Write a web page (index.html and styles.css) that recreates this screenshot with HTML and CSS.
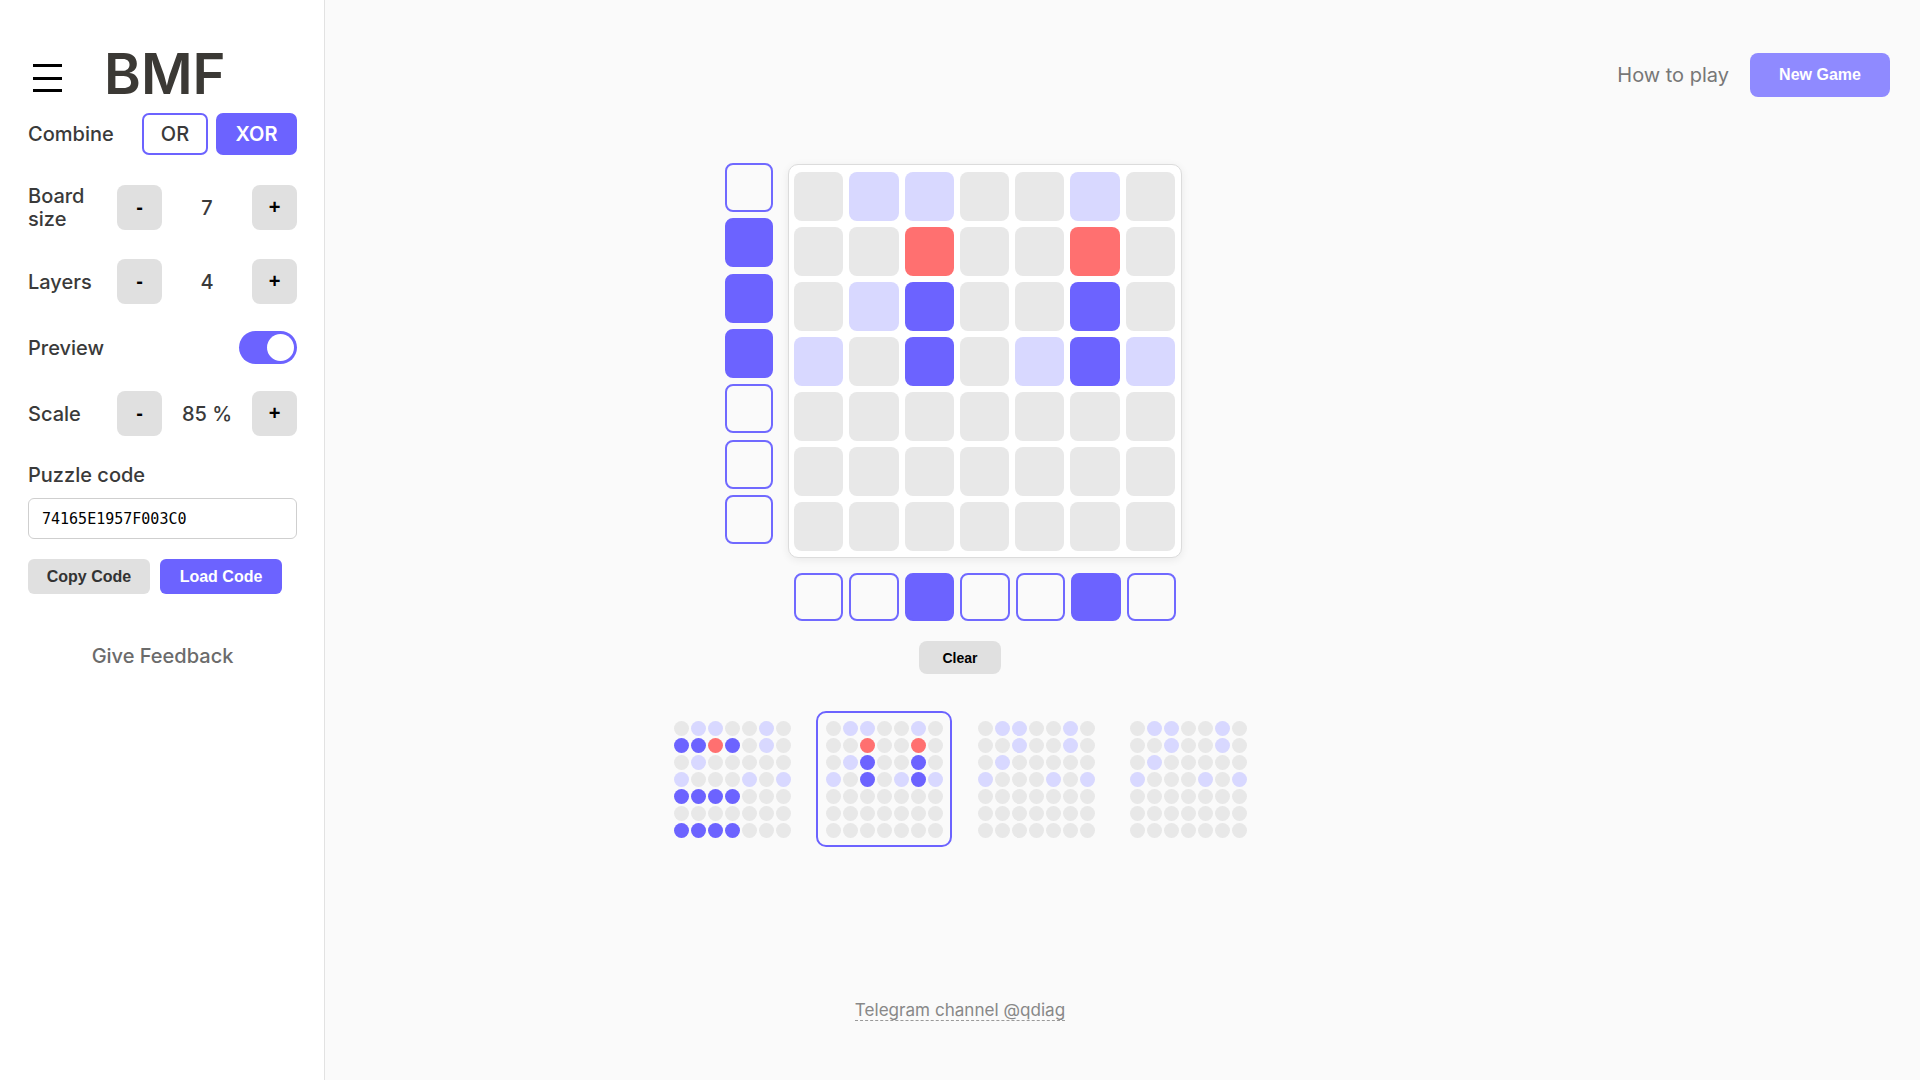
FILE: index.html
```html
<!DOCTYPE html>
<html lang="en">
<head>
<meta charset="utf-8">
<title>BMF</title>
<link rel="stylesheet" href="styles.css">
</head>
<body>
<aside class="sidebar">
  <div class="brand">
    <div class="burger"><span></span><span></span><span></span></div>
    <h1 class="title">BMF</h1>
  </div>
  <div class="row row-combine">
    <span class="label">Combine</span>
    <div class="seg-group">
      <button class="seg seg-or">OR</button>
      <button class="seg seg-xor">XOR</button>
    </div>
  </div>
  <div class="row row-board">
    <span class="label label-wrap">Board size</span>
    <div class="stepper">
      <button class="step-btn">-</button>
      <span class="value">7</span>
      <button class="step-btn">+</button>
    </div>
  </div>
  <div class="row row-layers">
    <span class="label">Layers</span>
    <div class="stepper">
      <button class="step-btn">-</button>
      <span class="value">4</span>
      <button class="step-btn">+</button>
    </div>
  </div>
  <div class="row row-preview">
    <span class="label">Preview</span>
    <div class="toggle"><span class="knob"></span></div>
  </div>
  <div class="row row-scale">
    <span class="label">Scale</span>
    <div class="stepper">
      <button class="step-btn">-</button>
      <span class="value">85 %</span>
      <button class="step-btn">+</button>
    </div>
  </div>
  <div class="label code-label">Puzzle code</div>
  <input class="code-input" type="text" value="74165E1957F003C0">
  <div class="code-actions">
    <button class="act act-copy">Copy Code</button>
    <button class="act act-load">Load Code</button>
  </div>
  <div class="feedback">Give Feedback</div>
</aside>

<main class="main">
  <header class="topbar">
    <span class="how">How to play</span>
    <button class="newgame">New Game</button>
  </header>

  <section class="game">
    <div class="hints-v">
      <span class="hint"></span>
      <span class="hint on"></span>
      <span class="hint on"></span>
      <span class="hint on"></span>
      <span class="hint"></span>
      <span class="hint"></span>
      <span class="hint"></span>
    </div>
    <div class="board">
      <span class="cell"></span><span class="cell l"></span><span class="cell l"></span><span class="cell"></span><span class="cell"></span><span class="cell l"></span><span class="cell"></span>
      <span class="cell"></span><span class="cell"></span><span class="cell r"></span><span class="cell"></span><span class="cell"></span><span class="cell r"></span><span class="cell"></span>
      <span class="cell"></span><span class="cell l"></span><span class="cell p"></span><span class="cell"></span><span class="cell"></span><span class="cell p"></span><span class="cell"></span>
      <span class="cell l"></span><span class="cell"></span><span class="cell p"></span><span class="cell"></span><span class="cell l"></span><span class="cell p"></span><span class="cell l"></span>
      <span class="cell"></span><span class="cell"></span><span class="cell"></span><span class="cell"></span><span class="cell"></span><span class="cell"></span><span class="cell"></span>
      <span class="cell"></span><span class="cell"></span><span class="cell"></span><span class="cell"></span><span class="cell"></span><span class="cell"></span><span class="cell"></span>
      <span class="cell"></span><span class="cell"></span><span class="cell"></span><span class="cell"></span><span class="cell"></span><span class="cell"></span><span class="cell"></span>
    </div>
    <div class="hints-h">
      <span class="hint"></span>
      <span class="hint"></span>
      <span class="hint on"></span>
      <span class="hint"></span>
      <span class="hint"></span>
      <span class="hint on"></span>
      <span class="hint"></span>
    </div>
  </section>

  <button class="clear">Clear</button>

  <section class="previews">
    <div class="pv">
      <i></i><i class="l"></i><i class="l"></i><i></i><i></i><i class="l"></i><i></i>
      <i class="p"></i><i class="p"></i><i class="r"></i><i class="p"></i><i></i><i class="l"></i><i></i>
      <i></i><i class="l"></i><i></i><i></i><i></i><i></i><i></i>
      <i class="l"></i><i></i><i></i><i></i><i class="l"></i><i></i><i class="l"></i>
      <i class="p"></i><i class="p"></i><i class="p"></i><i class="p"></i><i></i><i></i><i></i>
      <i></i><i></i><i></i><i></i><i></i><i></i><i></i>
      <i class="p"></i><i class="p"></i><i class="p"></i><i class="p"></i><i></i><i></i><i></i>
    </div>
    <div class="pv sel">
      <i></i><i class="l"></i><i class="l"></i><i></i><i></i><i class="l"></i><i></i>
      <i></i><i></i><i class="r"></i><i></i><i></i><i class="r"></i><i></i>
      <i></i><i class="l"></i><i class="p"></i><i></i><i></i><i class="p"></i><i></i>
      <i class="l"></i><i></i><i class="p"></i><i></i><i class="l"></i><i class="p"></i><i class="l"></i>
      <i></i><i></i><i></i><i></i><i></i><i></i><i></i>
      <i></i><i></i><i></i><i></i><i></i><i></i><i></i>
      <i></i><i></i><i></i><i></i><i></i><i></i><i></i>
    </div>
    <div class="pv">
      <i></i><i class="l"></i><i class="l"></i><i></i><i></i><i class="l"></i><i></i>
      <i></i><i></i><i class="l"></i><i></i><i></i><i class="l"></i><i></i>
      <i></i><i class="l"></i><i></i><i></i><i></i><i></i><i></i>
      <i class="l"></i><i></i><i></i><i></i><i class="l"></i><i></i><i class="l"></i>
      <i></i><i></i><i></i><i></i><i></i><i></i><i></i>
      <i></i><i></i><i></i><i></i><i></i><i></i><i></i>
      <i></i><i></i><i></i><i></i><i></i><i></i><i></i>
    </div>
    <div class="pv">
      <i></i><i class="l"></i><i class="l"></i><i></i><i></i><i class="l"></i><i></i>
      <i></i><i></i><i class="l"></i><i></i><i></i><i class="l"></i><i></i>
      <i></i><i class="l"></i><i></i><i></i><i></i><i></i><i></i>
      <i class="l"></i><i></i><i></i><i></i><i class="l"></i><i></i><i class="l"></i>
      <i></i><i></i><i></i><i></i><i></i><i></i><i></i>
      <i></i><i></i><i></i><i></i><i></i><i></i><i></i>
      <i></i><i></i><i></i><i></i><i></i><i></i><i></i>
    </div>
  </section>

  <footer class="footer">
    <a class="tg" href="#">Telegram channel @qdiag</a>
  </footer>
</main>
</body>
</html>
```
FILE: styles.css
```css
* { box-sizing: border-box; }
html, body { margin: 0; padding: 0; }
body {
  background: #fafafa;
  font-family: Inter, "Noto Sans", sans-serif;
  color: #3a3a3a;
}
button { cursor: pointer; }

/* Sidebar drawer */
.sidebar {
  position: fixed;
  top: 0;
  left: 0;
  bottom: 0;
  width: 325px;
  background: #fff;
  border-right: 1px solid #e2e2e2;
  padding: 0 27px 0 28px;
  display: flex;
  flex-direction: column;
  z-index: 2;
}
.brand {
  display: flex;
  align-items: center;
  margin-top: 46px;
  height: 56px;
}
.burger {
  width: 29px;
  display: flex;
  flex-direction: column;
  gap: 9.5px;
  margin: 8px 42px 0 5px;
}
.burger span {
  display: block;
  height: 3px;
  background: #000;
}
.title {
  margin: 0;
  font-size: 56px;
  line-height: 56px;
  font-weight: 600;
  color: #3b3935;
}
.row {
  display: flex;
  align-items: center;
  justify-content: space-between;
}
.label {
  font-size: 20px;
  font-weight: 500;
  color: #3a3a3a;
  line-height: 24px;
}
.label-wrap {
  max-width: 70px;
  line-height: 23px;
}
.row-combine { margin-top: 11px; height: 42px; }
.row-board { margin-top: 30px; height: 45px; }
.row-layers { margin-top: 29px; height: 45px; }
.row-preview { margin-top: 21px; height: 45px; }
.row-scale { margin-top: 21px; height: 45px; }

.seg-group { display: flex; gap: 8px; }
.seg {
  height: 42px;
  border: 2px solid #6c63ff;
  border-radius: 7px;
  font-family: Inter, sans-serif;
  font-size: 20px;
  font-weight: 500;
  padding: 0;
}
.seg-or { width: 66px; background: #fff; color: #3a3a3a; }
.seg-xor { width: 81px; background: #6c63ff; color: #fff; font-weight: 600; }

.stepper { display: flex; align-items: center; }
.step-btn {
  width: 45px;
  height: 45px;
  border: 0;
  border-radius: 8px;
  background: #e0e0e0;
  color: #000;
  font-family: "Liberation Sans", Arial, sans-serif;
  font-weight: 700;
  font-size: 20px;
  padding: 0;
}
.value {
  width: 90px;
  text-align: center;
  font-size: 20px;
  font-weight: 500;
  color: #3a3a3a;
}
.toggle {
  position: relative;
  width: 58px;
  height: 33px;
  border-radius: 17px;
  background: #6c63ff;
}
.knob {
  position: absolute;
  top: 3px;
  right: 3px;
  width: 27px;
  height: 27px;
  border-radius: 50%;
  background: #fff;
}
.code-label { margin-top: 27px; }
.code-input {
  margin-top: 11px;
  width: 100%;
  height: 41px;
  border: 1px solid #cfcfcf;
  border-radius: 6px;
  padding: 0 13px;
  font-family: "DejaVu Sans Mono", monospace;
  font-size: 15px;
  color: #000;
  background: #fff;
}
.code-actions {
  margin-top: 20px;
  display: flex;
  gap: 10px;
}
.act {
  width: 122px;
  height: 35px;
  border: 0;
  border-radius: 6px;
  font-family: "Liberation Sans", Arial, sans-serif;
  font-weight: 700;
  font-size: 16px;
  padding: 0;
}
.act-copy { background: #e0e0e0; color: #333; }
.act-load { background: #6c63ff; color: #fff; }
.feedback {
  margin-top: 50px;
  text-align: center;
  font-size: 20px;
  font-weight: 500;
  line-height: 24px;
  color: #6b6b6b;
}

/* Main */
.main {
  min-height: 100vh;
  display: flex;
  flex-direction: column;
  align-items: center;
}
.topbar {
  align-self: stretch;
  display: flex;
  justify-content: flex-end;
  align-items: center;
  gap: 21px;
  padding: 53px 30px 0 0;
}
.how {
  font-size: 20px;
  color: #777;
}
.newgame {
  width: 140px;
  height: 44px;
  border: 0;
  border-radius: 8px;
  background: #8f8aff;
  color: #fff;
  font-family: "Liberation Sans", Arial, sans-serif;
  font-weight: 700;
  font-size: 16px;
  padding: 0;
}

.game {
  margin-top: 66px;
  display: grid;
  grid-template-columns: 48px 394px;
  column-gap: 15px;
  row-gap: 15px;
  padding-right: 13px;
}
.hints-v {
  display: grid;
  grid-template-rows: repeat(7, 49px);
  row-gap: 6.33px;
}
.hint {
  display: block;
  border: 2px solid #7069ff;
  border-radius: 8px;
  background: transparent;
}
.hint.on { background: #6c63ff; border-color: #6c63ff; }
.board {
  margin-top: 1px;
  width: 394px;
  height: 394px;
  background: #fff;
  border: 1px solid #dcdcdc;
  border-radius: 10px;
  box-shadow: 0 2px 8px rgba(0, 0, 0, 0.07);
  padding: 7px 6px 6px 5px;
  display: grid;
  grid-template-columns: repeat(7, 1fr);
  grid-template-rows: repeat(7, 1fr);
  gap: 6px;
}
.cell {
  display: block;
  border-radius: 8px;
  background: #e8e8e8;
}
.cell.l { background: #d8d8ff; }
.cell.p { background: #6c63ff; }
.cell.r { background: #ff7070; }
.hints-h {
  grid-column: 2;
  height: 48px;
  display: grid;
  grid-template-columns: repeat(7, 1fr);
  gap: 6px;
  padding: 0 6px;
}

.clear {
  margin-top: 20px;
  width: 82px;
  height: 33px;
  border: 0;
  border-radius: 8px;
  background: #e0e0e0;
  color: #000;
  font-family: "Liberation Sans", Arial, sans-serif;
  font-weight: 700;
  font-size: 14px;
  padding: 0;
}

.previews {
  margin-top: 37px;
  display: flex;
  gap: 16px;
}
.pv {
  width: 136px;
  height: 136px;
  border: 2px solid transparent;
  border-radius: 10px;
  padding: 7.5px;
  display: grid;
  grid-template-columns: repeat(7, 15px);
  grid-auto-rows: 15px;
  gap: 2px;
}
.pv.sel { border-color: #6c63ff; }
.pv i {
  display: block;
  border-radius: 50%;
  background: #e8e8e8;
}
.pv i.l { background: #d8d8ff; }
.pv i.p { background: #6c63ff; }
.pv i.r { background: #ff7070; }

.footer {
  margin-top: auto;
  padding-bottom: 58px;
  line-height: 24px;
}
.tg {
  font-size: 17.1px;
  color: #888;
  text-decoration: none;
  border-bottom: 1px dashed #999;
}
```
